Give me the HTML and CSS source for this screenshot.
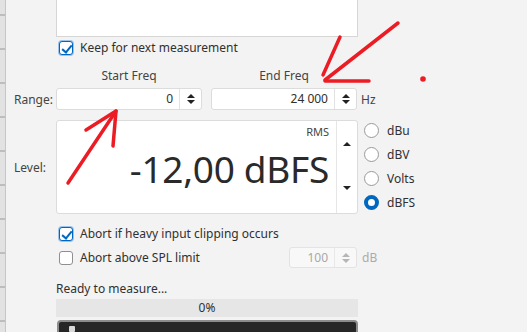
FILE: index.html
```html
<!doctype html>
<html>
<head>
<meta charset="utf-8">
<title>Measure</title>
<link rel="stylesheet" href="styles.css">
</head>
<body>
<div class="window">
	<div class="strip"></div>
	<div class="form">
		<div class="row">
			<div class="lbl"></div>
			<div class="memo"></div>
		</div>
		<div class="row keep">
			<div class="lbl"></div>
			<label class="check"><span class="box on"></span>Keep for next measurement</label>
		</div>
		<div class="row heads">
			<div class="lbl"></div>
			<div class="head">Start Freq</div>
			<div class="head">End Freq</div>
		</div>
		<div class="row fields">
			<div class="lbl">Range:</div>
			<div class="spin wide">
				<span class="val">0</span>
				<span class="arrows"><i class="up"></i><i class="down"></i></span>
			</div>
			<div class="spin wide">
				<span class="val">24 000</span>
				<span class="arrows"><i class="up"></i><i class="down"></i></span>
			</div>
			<span class="unit">Hz</span>
		</div>
		<div class="row level">
			<div class="lbl">Level:</div>
			<div class="meter">
				<div class="display">
					<span class="rms">RMS</span>
					<span class="big">-12,00 dBFS</span>
				</div>
				<div class="meter-arrows"><i class="up"></i><i class="down"></i></div>
			</div>
			<div class="radios">
				<div class="radio"><span class="dot"></span>dBu</div>
				<div class="radio"><span class="dot"></span>dBV</div>
				<div class="radio"><span class="dot"></span>Volts</div>
				<div class="radio"><span class="dot on"></span>dBFS</div>
			</div>
		</div>
		<div class="row abort1">
			<div class="lbl"></div>
			<label class="check"><span class="box on"></span>Abort if heavy input clipping occurs</label>
		</div>
		<div class="row abort2">
			<div class="lbl"></div>
			<div class="line">
				<label class="check"><span class="box"></span>Abort above SPL limit</label>
				<div class="spin small off">
					<span class="val">100</span>
					<span class="arrows"><i class="up"></i><i class="down"></i></span>
				</div>
			</div>
			<span class="unit off">dB</span>
		</div>
		<div class="row status">
			<div class="lbl"></div>
			<div class="ready">Ready to measure...</div>
		</div>
		<div class="row prog">
			<div class="lbl"></div>
			<div class="progress">0%</div>
		</div>
		<div class="row go">
			<div class="lbl"></div>
			<div class="start"><span class="ico"></span></div>
		</div>
	</div>
	<svg class="marks" width="527" height="332" viewBox="0 0 527 332">
		<g fill="none" stroke="#ec1c24" stroke-width="3.5" stroke-linecap="round" stroke-linejoin="round">
			<path d="M68 183 L116 111"/>
			<path d="M86 130 L116 111 L113 146"/>
			<path d="M398 23 L325 80"/>
			<path d="M340 37 L323 75"/>
			<path d="M325 81 L369 81"/>
		</g>
		<circle cx="423" cy="79" r="2.8" fill="#ec1c24"/>
	</svg>
</div>
</body>
</html>
```

FILE: styles.css
```css
*{ margin: 0; padding: 0; box-sizing: border-box;}
body{ background: #f3f3f3; font-family: "Noto Sans", "Open Sans", sans-serif; font-size: 12px; color: #303030;}
.window{ position: relative; width: 527px; height: 332px; display: flex; overflow: hidden;}
.strip{ width: 6px; flex: none; border-right: 1px solid #c6c6c6; background: #e2e2e2 repeating-linear-gradient(to bottom, transparent 0, transparent 14px, #bdbdbd 14px, #bdbdbd 16px, transparent 16px, transparent 34px);}
.form{ flex: 1; display: flex; flex-direction: column;}
.row{ display: flex; align-items: center;}
.lbl{ width: 50px; flex: none; padding-left: 8px; color: #444;}

.memo{ width: 302px; height: 37px; background: #fff; border: 1px solid #d6d6d6; border-top: none;}

.check{ display: flex; align-items: center; gap: 7px; margin-left: 3px; height: 14px; line-height: 14px;}
.box{ width: 14px; height: 14px; border: 1px solid #8f8f8f; border-radius: 3px; background: #fff; position: relative;}
.box.on{ border: 1px solid #0067c0; box-shadow: 0 0 0 1px #9cc3ea;}
.box.on::before{ content: ""; position: absolute; left: 4px; top: 1px; width: 4px; height: 8px; border: solid #0067c0; border-width: 0 2px 2px 0; transform: rotate(40deg);}

.keep{ margin-top: 4px;}
.heads{ margin-top: 14px; height: 14px; line-height: 14px;}
.head{ width: 146px; text-align: center; color: #444;}
.head + .head{ margin-left: 9px;}

.fields{ margin-top: 5px;}
.spin{ height: 22px; display: flex; background: #fff; border: 1px solid #dcdcdc; border-radius: 3px;}
.spin.wide{ width: 146px;}
.spin.wide + .spin.wide{ margin-left: 9px;}
.spin .val{ flex: 1; text-align: right; padding-right: 6px; line-height: 20px;}
.arrows{ width: 22px; border-left: 1px solid #e2e2e2; display: flex; flex-direction: column; align-items: center; justify-content: center; gap: 2px;}
.up, .down{ display: block; width: 0; height: 0; border-left: 4px solid transparent; border-right: 4px solid transparent;}
.up{ border-bottom: 4px solid #222;}
.down{ border-top: 4px solid #222;}
.unit{ margin-left: 4px; color: #444;}

.level{ margin-top: 10px;}
.meter{ width: 302px; height: 94px; display: flex; background: #fff; border: 1px solid #dcdcdc; border-radius: 3px;}
.display{ flex: 1; display: flex; flex-direction: column; align-items: flex-end; padding: 4px 7px 0 0;}
.rms{ font-size: 11px; line-height: 14px; color: #444;}
.big{ font-size: 37px; line-height: 44px; margin-top: 8px; color: #2a2a2a; letter-spacing: -0.3px;}
.meter-arrows{ width: 21px; border-left: 1px solid #e6e6e6; display: flex; flex-direction: column; align-items: center; justify-content: space-between; padding: 21px 0 23px;}
.radios{ margin-left: 6px; align-self: flex-start; padding-top: 3px; display: flex; flex-direction: column; gap: 9px;}
.radio{ display: flex; align-items: center; gap: 8px; height: 15px; line-height: 15px;}
.dot{ width: 15px; height: 15px; border: 1px solid #9a9a9a; border-radius: 50%; background: #fff;}
.dot.on{ border: 4px solid #0067c0;}

.abort1{ margin-top: 13px;}
.abort2{ margin-top: 6px; height: 21px;}
.line{ width: 302px; display: flex; align-items: center; justify-content: space-between;}
.spin.small{ width: 68px; height: 21px; margin-right: 1px;}
.spin.off{ background: #f8f8f8; border-color: #e3e3e3; color: #a8a8a8;}
.spin.off .arrows{ border-left-color: #e8e8e8;}
.spin.off .up{ border-bottom-color: #b5b5b5;}
.spin.off .down{ border-top-color: #b5b5b5;}
.unit.off{ color: #ababab;}

.status{ margin-top: 14px; height: 14px; line-height: 14px;}
.prog{ margin-top: 3px;}
.progress{ width: 302px; height: 18px; line-height: 18px; background: #e6e6e6; text-align: center;}
.go{ margin-top: 3px; align-items: flex-start;}
.start{ width: 301px; height: 24px; margin-left: 1px; background: #262626; border: 2px solid #8c8c8c; border-radius: 4px; padding: 4px 0 0 10px;}
.ico{ display: block; width: 6px; height: 6px; background: #d8d8d8; border-radius: 1px;}

.marks{ position: absolute; left: 0; top: 0; pointer-events: none;}
```
